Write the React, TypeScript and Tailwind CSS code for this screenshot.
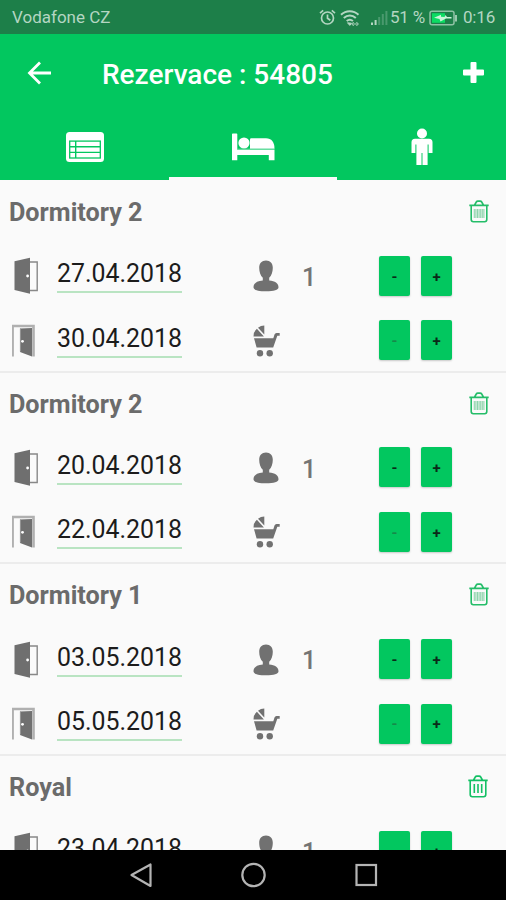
import type { ReactNode } from "react";
import clsx from "clsx";

interface Room {
  name: string;
  checkIn: string;
  checkOut: string;
  adults: number;
  sharpTrash?: boolean;
}

const rooms: Room[] = [
  { name: "Dormitory 2", checkIn: "27.04.2018", checkOut: "30.04.2018", adults: 1 },
  { name: "Dormitory 2", checkIn: "20.04.2018", checkOut: "22.04.2018", adults: 1 },
  { name: "Dormitory 1", checkIn: "03.05.2018", checkOut: "05.05.2018", adults: 1 },
  { name: "Royal", checkIn: "23.04.2018", checkOut: "25.04.2018", adults: 1, sharpTrash: true },
];

function StatusBar() {
  return (
    <div className="flex h-[34px] shrink-0 items-center bg-[#1d7f49] pt-px pl-3 text-[#b4d6c2]">
      <span className="w-[307px] text-[17px]">Vodafone CZ</span>
      {/* Alarm */}
      <svg className="-mt-px" width="17" height="17" viewBox="0 0 17 17" fill="none" stroke="currentColor" strokeWidth="1.7">
        <circle cx="8.5" cy="9" r="6" />
        <path d="M8.5 5.5v3.7l2.8 2M1 4.2 4.2 1.4M16 4.2l-3.2-2.8" />
      </svg>
      {/* Wifi */}
      <svg className="ml-1" width="20" height="18" viewBox="0 0 20 18" fill="none" stroke="currentColor" strokeWidth="2">
        <path d="M1 5.8C6 1 13.500 1 18.500 5.800M3.800 9c3.600-3.300 8.500-3.300 12 0M6.700 12c2-1.700 4.200-1.700 6.200 0" />
        <path d="m7.500 13.800 2.300 2.600 1.700-2.200zM12.500 15h5" fill="currentColor" strokeWidth="1" />
        <path d="m13.700 13-2 2 2 2M16.400 13l2 2-2 2" strokeWidth="1" />
      </svg>
      {/* Signal */}
      <svg className="ml-[11px]" width="17" height="16" viewBox="0 0 17 16" fill="currentColor">
        <path d="M0 12.500h2V15H0zM3.600 10h2v5h-2z" />
        <path d="M7.200 7h2v8h-2zM10.800 4h2v11h-2zM14.400 1h2v14h-2z" opacity=".3" />
      </svg>
      <span className="ml-[2px] w-[38px] whitespace-nowrap text-[17px] tracking-[-0.2px]">51 %</span>
      {/* Charging battery */}
      <svg className="ml-px" width="29" height="16" viewBox="0 0 29 16" fill="none">
        <rect x="1" y="1.200" width="24" height="13.600" rx="2" stroke="#8fc2a5" strokeWidth="1.500" />
        <path d="M3 3.200h13v9.600H3z" fill="#0bdc63" />
        <path d="m5 7.700 7-3v2l3.500.3 1-2 1.500 2h4.500v1.500H17l-5.500 3-1-2.500z" fill="#c9f5d9" />
        <path d="M27 5v6.500" stroke="#a8d0b8" strokeWidth="1.800" />
      </svg>
      <span className="ml-[5px] text-[17px] tracking-[-0.2px]">0:16</span>
    </div>
  );
}

function ListIcon() {
  return (
    <svg width="38" height="30" viewBox="0 0 38 30">
      <rect width="38" height="30" rx="3.500" fill="white" />
      <rect x="3.700" y="9.100" width="30.600" height="16.900" fill="none" stroke="#02c75f" strokeWidth="1.300" />
      <path d="M4 14.700h30M4 20.400h30M9.700 9v17" stroke="#02c75f" strokeWidth="1.400" />
    </svg>
  );
}

function BedIcon() {
  return (
    <svg width="43" height="28" viewBox="0 0 43 28" fill="white">
      <path d="M0 1.200Q0 .4.800.4H4.500Q5.300.4 5.300 1.200V16.800H42.500v10.500h-5.700V22H5.300v5.300H0z" />
      <circle cx="12" cy="10" r="5.600" />
      <path d="M18 15.700V6.500q0-1.200 1.200-1.200H34c5.500 0 8.500 4 8.500 10.400z" />
      <path d="M5.300 16.200H42.500" stroke="#8be5b5" strokeWidth=".8" />
    </svg>
  );
}

function PersonIcon() {
  return (
    <svg width="22" height="38" viewBox="0 0 22 38" fill="white">
      <circle cx="11" cy="5.500" r="5" />
      <path d="M4 10.800h14q3.500 0 3.500 3.500V25h-3.900v-8.500h-1V37h-5.100V25h-1v12H5.400V16.500h-1V25H.500V14.300q0-3.500 3.500-3.500z" />
      <path d="M11 25v12" stroke="#8be5b5" strokeWidth="1.200" />
    </svg>
  );
}

function TrashIcon({ sharp }: { sharp?: boolean }) {
  return (
    <svg
      className={clsx("-mt-[2px] shrink-0", sharp && "relative -left-px")}
      width="20"
      height="23"
      viewBox="0 0 20 23"
      fill="none"
      stroke={sharp ? "#13c064" : "#25bd69"}
      strokeWidth="1.600"
    >
      <path d="M.3 5.400h19.400M5.600 5l1.700-3q.5-.9 1.500-.9h2.400q1 0 1.500.9l1.700 3" />
      <path d="M2.200 6v13.500q0 2.200 2.200 2.200h11.200q2.200 0 2.200-2.200V6" />
      {sharp ? (
        <path d="M6.300 9v9M10 9v9M13.700 9v9" />
      ) : (
        <path d="M5.300 9v9M6.900 9v9M8.500 9v9M10.100 9v9M11.700 9v9M13.300 9v9M14.900 9v9" strokeWidth="1.100" stroke="#8fd5ad" />
      )}
    </svg>
  );
}

function DoorInIcon() {
  return (
    <svg width="28" height="38" viewBox="0 0 28 38">
      <path d="M17 5h8.200v28.500H17" fill="none" stroke="#888" strokeWidth="1.400" />
      <path d="M2.500 4.200 18 .700v36L2.500 33z" fill="#6f6f6f" />
      <circle cx="15.600" cy="19" r="1.400" fill="white" />
    </svg>
  );
}

function DoorOutIcon() {
  return (
    <svg width="28" height="38" viewBox="0 0 28 38">
      <path d="M.6 34.500V4h20.900v30.500" fill="none" stroke="#b0b0b0" strokeWidth="2.600" />
      <path d="M8 6.500 20 6v28.500L8 30z" fill="#707070" />
      <path d="M8.400 6.500v23" stroke="#999" />
      <circle cx="10.500" cy="19.300" r="1.400" fill="white" />
    </svg>
  );
}

function AdultIcon() {
  return (
    <svg width="26" height="32" viewBox="0 0 26 32" fill="#717171">
      <path d="M13 .6c4.300 0 6.800 3 6.800 7.200 0 4.300-1.300 8-3.600 9.900v2.700c5.800.4 9.300 2.700 9.300 6.800 0 2.800-4.500 4-12.500 4S.5 30 .5 27.200c0-4.100 3.500-6.400 9.300-6.800v-2.700C7.500 15.800 6.200 12.100 6.200 7.800 6.200 3.600 8.700.6 13 .6z" />
    </svg>
  );
}

function StrollerIcon() {
  return (
    <svg width="28" height="32" viewBox="0 0 28 32" fill="#717171">
      <path d="M11.300.5v8.900L5 2.700Q7.800.5 11.300.5zM3.900 3.700l7 7.700H.500Q.500 6.600 3.900 3.700z" />
      <path d="M1 13.200h19.300l1.200-3.700q.500-1.500 2-1.500h3.200v2.700h-2.400L20.200 22.500H3.600z" />
      <circle cx="7" cy="28.200" r="3.200" />
      <circle cx="16.700" cy="28.200" r="3.200" />
    </svg>
  );
}

function StepButton({ label, disabled }: { label: string; disabled?: boolean }) {
  return (
    <button
      className={clsx(
        "h-[40px] w-[31px] rounded-[2px] bg-[#02c75f] pt-[2px] text-[15px] font-bold shadow-[0_1px_2px_rgba(0,0,0,0.2)]",
        disabled ? "text-[#168a4a]" : "text-[#0b2a18]"
      )}
    >
      {label}
    </button>
  );
}

interface StayRowProps {
  door: ReactNode;
  date: string;
  guest: ReactNode;
  count?: number;
}

function StayRow({ door, date, guest, count }: StayRowProps) {
  return (
    <div className="flex h-[64.500px] items-center pl-3">
      <div className="w-[45px]">{door}</div>
      <div className="h-[34px] w-[125px] border-b-[2.500px] border-[#b9e4c2] text-[24.900px] leading-[30px] text-[#1c1c1c]">
        {date}
      </div>
      <div className="ml-[71px] w-[49px]">{guest}</div>
      <span className="w-[77px] pt-[3px] text-[25px] font-medium text-[#747474]">{count}</span>
      <div className="-mt-px flex gap-[11px]">
        <StepButton label="-" disabled={count === undefined} />
        <StepButton label="+" />
      </div>
    </div>
  );
}

function RoomCard({ room }: { room: Room }) {
  return (
    <section className="h-[191.700px] shrink-0 border-b-2 border-[#ececec]">
      <div className="flex h-[63px] items-center justify-between pr-[17px] pl-[9px]">
        <h2 className="pt-px text-[25.200px] font-bold text-[#6b6b6b]">{room.name}</h2>
        <TrashIcon sharp={room.sharpTrash} />
      </div>
      <StayRow door={<DoorInIcon />} date={room.checkIn} guest={<AdultIcon />} count={room.adults} />
      <StayRow door={<DoorOutIcon />} date={room.checkOut} guest={<StrollerIcon />} />
    </section>
  );
}

export default function App() {
  return (
    <div className="flex h-[900px] w-[506px] flex-col overflow-hidden bg-[#fafafa] font-[Roboto,sans-serif]">
      <StatusBar />
      <header className="shrink-0 bg-[#02c75f] text-white">
        <div className="flex h-[80px] items-center pr-[22px] pl-[27px]">
          <svg className="-mt-[2px]" width="25" height="24" viewBox="0 0 25 24" fill="none" stroke="white" strokeWidth="2.800">
            <path d="M24 12H2.500M13 1.500 2.500 12 13 22.500" />
          </svg>
          <h1 className="ml-[50px] flex-1 pt-[2px] text-[28px] font-medium">Rezervace : 54805</h1>
          <svg className="-mt-[3px]" width="21" height="21" viewBox="0 0 21 21" fill="white">
            <path d="M8.500 0h4q1 0 1 1v6.500H20q1 0 1 1v4q0 1-1 1h-6.500V20q0 1-1 1h-4q-1 0-1-1v-6.500H1q-1 0-1-1v-4q0-1 1-1h6.500V1q0-1 1-1z" />
          </svg>
        </div>
        <nav className="grid h-[66px] grid-cols-3">
          <div className="flex items-center justify-center pl-px">
            <ListIcon />
          </div>
          <div className="flex items-center justify-center border-b-[3px] border-[#fafafa] pt-[3px] pl-[2px]">
            <BedIcon />
          </div>
          <div className="flex items-center justify-center pl-px">
            <PersonIcon />
          </div>
        </nav>
      </header>
      <main className="flex min-h-0 flex-1 flex-col overflow-hidden pt-px">
        {rooms.map((room, i) => (
          <RoomCard key={i} room={room} />
        ))}
      </main>
      <footer className="flex h-[50px] shrink-0 items-center justify-center gap-[87px] bg-black">
        <svg width="25" height="26" viewBox="0 0 25 26" fill="none" stroke="#b4b4b4" strokeWidth="2.200" strokeLinejoin="round">
          <path d="M22.500 2.500v21.500L3.500 13z" />
        </svg>
        <svg width="26" height="26" viewBox="0 0 26 26" fill="none" stroke="#b4b4b4" strokeWidth="2.200">
          <circle cx="13.500" cy="13" r="11.200" />
        </svg>
        <svg width="25" height="26" viewBox="0 0 25 26" fill="none" stroke="#b4b4b4" strokeWidth="2.200">
          <rect x="3.500" y="3" width="19.500" height="20" />
        </svg>
      </footer>
    </div>
  );
}
